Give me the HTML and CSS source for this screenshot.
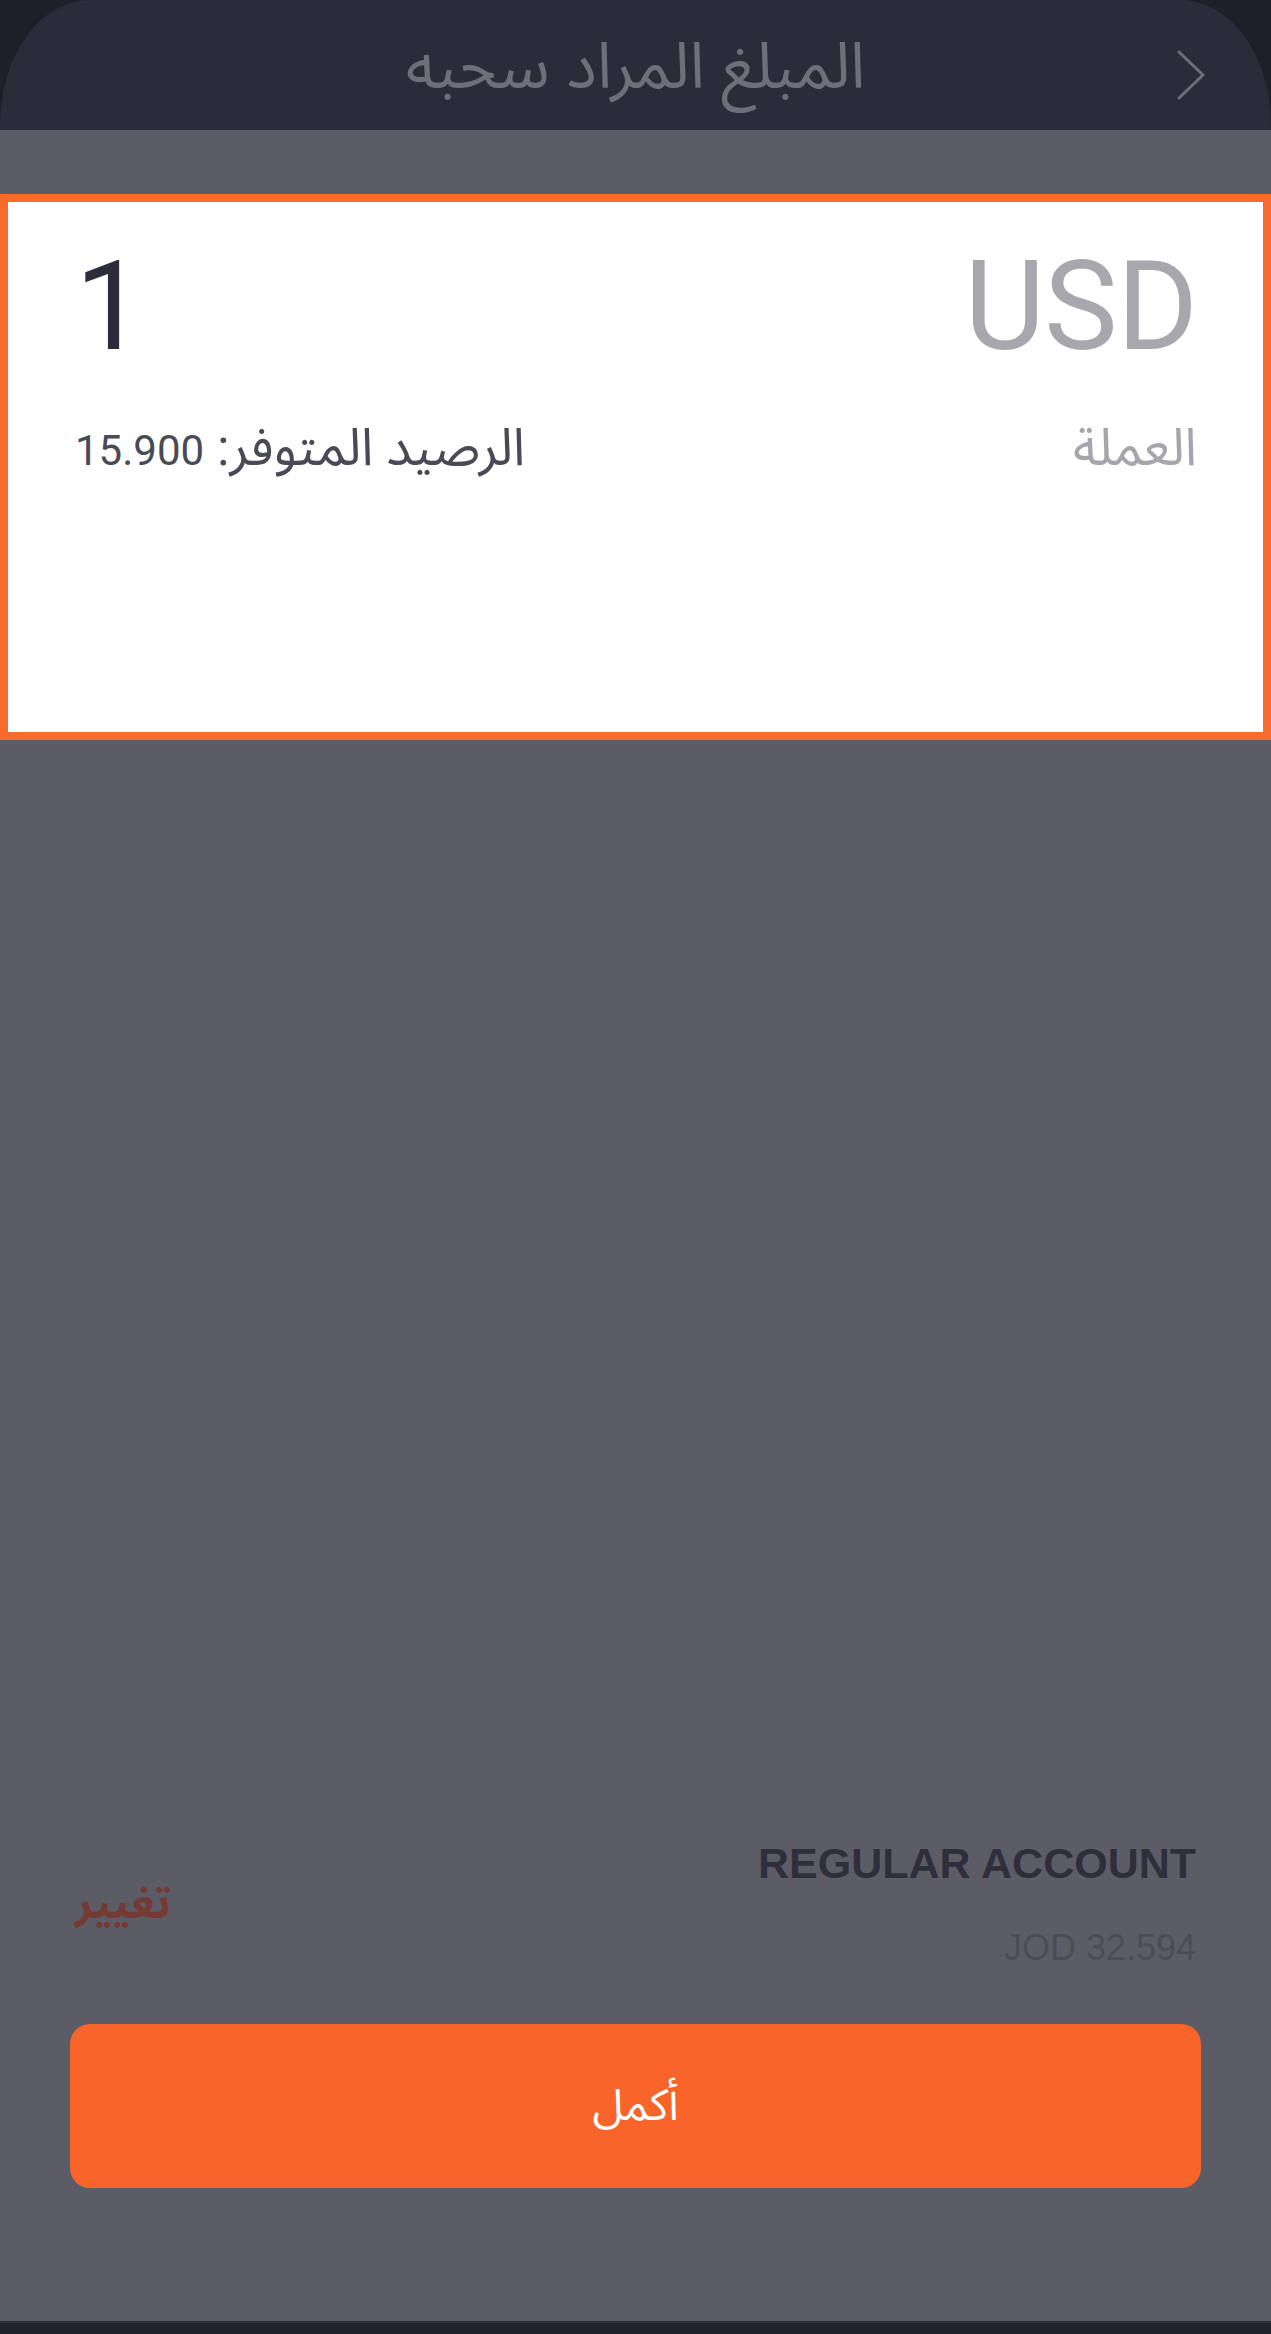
FILE: index.html
```html
<!DOCTYPE html>
<html lang="ar" dir="rtl">
<head>
    <meta charset="UTF-8">
    <meta name="viewport" content="width=device-width, initial-scale=1.0">
    <title>المبلغ المراد سحبه</title>
    <link rel="stylesheet" href="styles.css">
</head>
<body>
    <div class="screen">
        <!-- Top bar -->
        <header class="top-bar">
            <button class="back-btn" aria-label="رجوع">
                <svg width="28" height="50" viewBox="0 0 28 50">
                    <polyline points="2,2 26,25 2,48" fill="none" stroke="#6d6e7a" stroke-width="3" stroke-linecap="round" stroke-linejoin="round"/>
                </svg>
            </button>
            <h1 class="top-title">المبلغ المراد سحبه</h1>
            <span class="top-spacer"></span>
        </header>

        <main class="sheet">
            <!-- Amount input card -->
            <section class="amount-card">
                <div class="amount-row">
                    <span class="currency">USD</span>
                    <span class="amount">1</span>
                </div>
                <div class="meta-row">
                    <span class="meta-label">العملة</span>
                    <span class="balance">الرصيد المتوفر: <span class="balance-num">15.900</span></span>
                </div>
            </section>

            <!-- Source account -->
            <div class="account">
                <div class="account-info">
                    <div class="account-name">REGULAR ACCOUNT</div>
                    <div class="account-balance">JOD 32.594</div>
                </div>
                <a class="account-change" href="#">تغيير</a>
            </div>

            <button class="submit-btn">أكمل</button>
        </main>

        <div class="home-bar"></div>
    </div>
</body>
</html>
```

FILE: styles.css
```css
* {
    margin: 0;
    padding: 0;
    box-sizing: border-box;
}

body {
    background-color: #1f1f29;
    font-family: 'Roboto', 'Noto Sans Arabic', 'DejaVu Sans', sans-serif;
}

.screen {
    min-height: 100vh;
    display: flex;
    flex-direction: column;
}

/* Top bar */
.top-bar {
    height: 130px;
    padding-top: 20px;
    background-color: #2b2c39;
    border-radius: 90px 90px 0 0 / 125px 125px 0 0;
    display: grid;
    grid-template-columns: 1fr auto 1fr;
    align-items: center;
}

.back-btn {
    justify-self: start;
    margin-inline-start: 66px;
    background: none;
    border: 0;
    display: flex;
    cursor: pointer;
}

.top-title {
    font-family: 'Noto Sans Arabic', 'DejaVu Sans', sans-serif;
    font-size: 64px;
    font-weight: 400;
    line-height: 1;
    color: #6e6f7b;
    margin-top: -14px;
}

/* Dimmed sheet body */
.sheet {
    flex: 1;
    background-color: #5c5c67;
    display: flex;
    flex-direction: column;
    padding-top: 64px;
}

.amount-card {
    height: 546px;
    background-color: #ffffff;
    border: 8px solid #f96b2c;
    padding-top: 43px;
    padding-inline: 66px 67px;
}

.amount-row {
    display: flex;
    justify-content: space-between;
    align-items: baseline;
    font-size: 124px;
    line-height: 1;
}

.currency {
    color: #a7a7ad;
    letter-spacing: -1px;
}

.amount {
    color: #2c2c3a;
}

.meta-row {
    display: flex;
    justify-content: space-between;
    align-items: baseline;
    margin-top: 48px;
    font-size: 52px;
    line-height: 1.2;
}

.meta-label {
    color: #a5a5ab;
}

.balance {
    color: #4a4a56;
}

.balance-num {
    font-size: 42px;
    letter-spacing: -1px;
}

/* Account summary */
.account {
    margin-top: auto;
    display: flex;
    justify-content: space-between;
    align-items: center;
    padding: 0 75px;
}

.account-name {
    font-family: 'Liberation Sans', Arial, sans-serif;
    font-size: 43px;
    font-weight: 700;
    line-height: 1;
    color: #2f2f3c;
}

.account-balance {
    font-family: 'Liberation Sans', Arial, sans-serif;
    font-size: 36px;
    line-height: 1;
    color: #4c4c58;
    margin-top: 45px;
}

.account-change {
    font-family: 'Noto Sans Arabic', 'DejaVu Sans', sans-serif;
    font-size: 44px;
    font-weight: 700;
    color: #763a35;
    text-decoration: none;
}

.submit-btn {
    margin: 58px 70px 133px;
    height: 164px;
    border: 0;
    border-radius: 20px;
    background-color: #f8642a;
    color: #ffffff;
    font-family: 'Noto Sans Arabic', 'DejaVu Sans', sans-serif;
    font-size: 44px;
    cursor: pointer;
}

.home-bar {
    height: 13px;
    background-color: #22222d;
    border-top: 2px solid #30303c;
}
```
